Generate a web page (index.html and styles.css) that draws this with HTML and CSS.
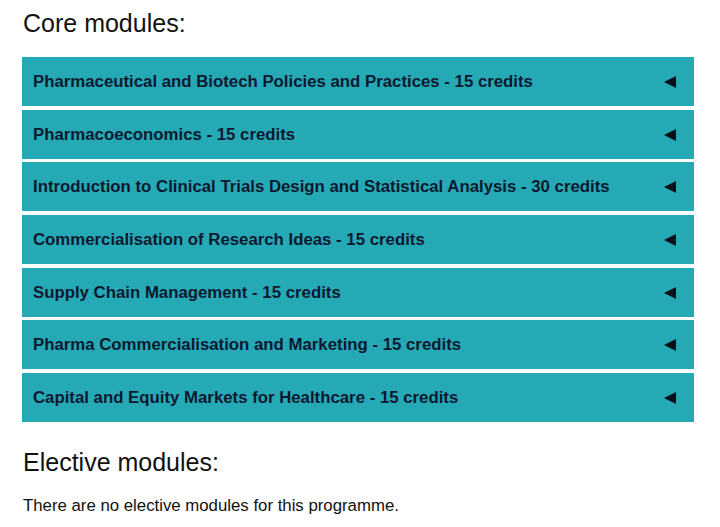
FILE: index.html
```html
<!DOCTYPE html>
<html lang="en">
<head>
    <meta charset="UTF-8">
    <meta name="viewport" content="width=device-width, initial-scale=1.0">
    <title>Programme modules</title>
    <link rel="stylesheet" href="styles.css">
</head>
<body>
<div class="modules">
    <h2>Core modules:</h2>

    <ul class="module-list">
        <li class="module">
            <span>Pharmaceutical and Biotech Policies and Practices - 15 credits</span>
            <span class="arrow"></span>
        </li>
        <li class="module">
            <span>Pharmacoeconomics - 15 credits</span>
            <span class="arrow"></span>
        </li>
        <li class="module">
            <span>Introduction to Clinical Trials Design and Statistical Analysis - 30 credits</span>
            <span class="arrow"></span>
        </li>
        <li class="module">
            <span>Commercialisation of Research Ideas - 15 credits</span>
            <span class="arrow"></span>
        </li>
        <li class="module">
            <span>Supply Chain Management - 15 credits</span>
            <span class="arrow"></span>
        </li>
        <li class="module">
            <span>Pharma Commercialisation and Marketing - 15 credits</span>
            <span class="arrow"></span>
        </li>
        <li class="module">
            <span>Capital and Equity Markets for Healthcare - 15 credits</span>
            <span class="arrow"></span>
        </li>
    </ul>

    <h2 class="elective-title">Elective modules:</h2>
    <p class="note">There are no elective modules for this programme.</p>
</div>
</body>
</html>
```

FILE: styles.css
```css
/* Общий стиль */
body {
    margin: 0;
    font-family: 'Liberation Sans', Arial, sans-serif;
    background-color: #fff;
    color: #111;
}

.modules {
    padding: 0 26px 0 22px;
}

/* Заголовки */
h2 {
    font-size: 25px;
    font-weight: normal;
    line-height: 30px;
    margin: 8px 0 19px 1px;
}

.elective-title {
    margin-top: 25px;
    margin-bottom: 19px;
}

/* Список модулей */
.module-list {
    list-style: none;
    margin: 0;
    padding: 0;
    display: flex;
    flex-direction: column;
    gap: 3.67px;
}

.module {
    box-sizing: border-box;
    height: 49px;
    background-color: #25a9b5;
    color: #0b1830;
    font-size: 16.8px;
    font-weight: bold;
    padding: 1px 18px 0 11px;
    display: flex;
    align-items: center;
    justify-content: space-between;
}

/* Стрелка */
.arrow {
    width: 0;
    height: 0;
    border-top: 6px solid transparent;
    border-bottom: 6px solid transparent;
    border-right: 12px solid #0a0f1a;
}

.note {
    font-size: 16.8px;
    line-height: 20px;
    margin: 0 0 0 1px;
}
```
